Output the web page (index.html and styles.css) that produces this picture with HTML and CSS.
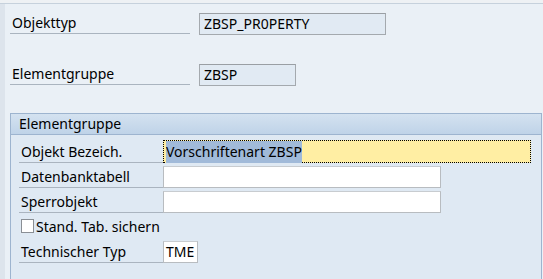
FILE: index.html
```html
<!DOCTYPE html>
<html lang="de">
<head>
  <meta charset="UTF-8">
  <title>Elementgruppe</title>
  <link rel="stylesheet" href="styles.css">
</head>
<body>

<div class="topbar"></div>
<div class="screen">
  <div class="row head-row first">
    <div class="label">Objekttyp</div>
    <div class="field readonly wide">ZBSP_PR0PERTY</div>
  </div>
  <div class="row head-row second">
    <div class="label">Elementgruppe</div>
    <div class="field readonly short">ZBSP</div>
  </div>

  <div class="group">
    <div class="group-title">Elementgruppe</div>
    <div class="group-body">
      <div class="grow">
        <div class="glabel">Objekt Bezeich.</div>
        <div class="field focus"><span class="sel">Vorschriftenart ZBSP</span></div>
      </div>
      <div class="grow">
        <div class="glabel">Datenbanktabell</div>
        <div class="field edit"></div>
      </div>
      <div class="grow">
        <div class="glabel">Sperrobjekt</div>
        <div class="field edit"></div>
      </div>
      <div class="grow check-row">
        <span class="box"></span>
        <span>Stand. Tab. sichern</span>
      </div>
      <div class="grow">
        <div class="glabel">Technischer Typ</div>
        <div class="field edit tiny">TME</div>
      </div>
    </div>
  </div>
</div>

</body>
</html>
```

FILE: styles.css
```css
body {
  margin: 0;
  font-family: "Noto Sans", "DejaVu Sans", sans-serif;
  font-size: 14px;
  color: #000;
  background: #eaf0f6;
  height: 279px;
  overflow: hidden;
}
.topbar {
  height: 3px;
  background: #eef1f4;
  border-bottom: 1px solid #c6d1dc;
}
.screen {
  border-left: 5px solid #dde4ec;
  padding-left: 5px;
  height: 275px;
}
.row {
  display: flex;
  align-items: flex-end;
}
.head-row.first {
  padding-top: 8px;
}
.head-row.second {
  margin-top: 28px;
}
.label {
  width: 178px;
  padding-left: 2px;
  height: 21px;
  line-height: 21px;
  border-bottom: 1px solid #aab4bf;
  margin-right: 9px;
  margin-bottom: 1px;
}
.field {
  box-sizing: border-box;
  height: 22px;
  line-height: 20px;
  padding-left: 3px;
  white-space: nowrap;
}
.readonly {
  background: #e1eaf3;
  border: 1px solid #a4a9ae;
  border-top-color: #9a9fa4;
  padding-left: 4px;
}
.wide { width: 187px; }
.short { width: 97px; }

.group {
  margin-top: 27px;
  width: 530px;
  border: 1px solid #9db4cf;
  border-bottom: none;
  background: #dfe9f3;
  height: 170px;
}
.group-title {
  height: 20px;
  line-height: 20px;
  padding-left: 8px;
  background: linear-gradient(#d4e2f0, #bfd3e8);
  border-bottom: 1px solid #9db4cf;
}
.group-body {
  padding: 4px 0 0 8px;
}
.grow {
  display: flex;
  align-items: flex-end;
  height: 24px;
  margin-bottom: 1px;
}
.glabel {
  width: 142px;
  padding-left: 2px;
  height: 21px;
  line-height: 21px;
  border-bottom: 1px solid #aab4bf;
}
.edit {
  background: #fff;
  border: 1px solid #b8bcc0;
  border-top-color: #c8ccd0;
  width: 278px;
}
.tiny {
  width: 35px;
  padding-left: 2px;
}
.focus {
  height: 23px;
  width: 368px;
  background: #ffeea3;
  border: 1px dotted #000;
  padding-left: 2px;
  line-height: 21px;
}
.sel {
  background: #a1bad9;
  padding: 1px 0 2px;
}
.check-row {
  align-items: center;
  height: 24px;
  padding-left: 2px;
}
.box {
  box-sizing: border-box;
  width: 13px;
  height: 14px;
  background: #fff;
  border: 1px solid #8a8f95;
  margin-right: 2px;
}
```
